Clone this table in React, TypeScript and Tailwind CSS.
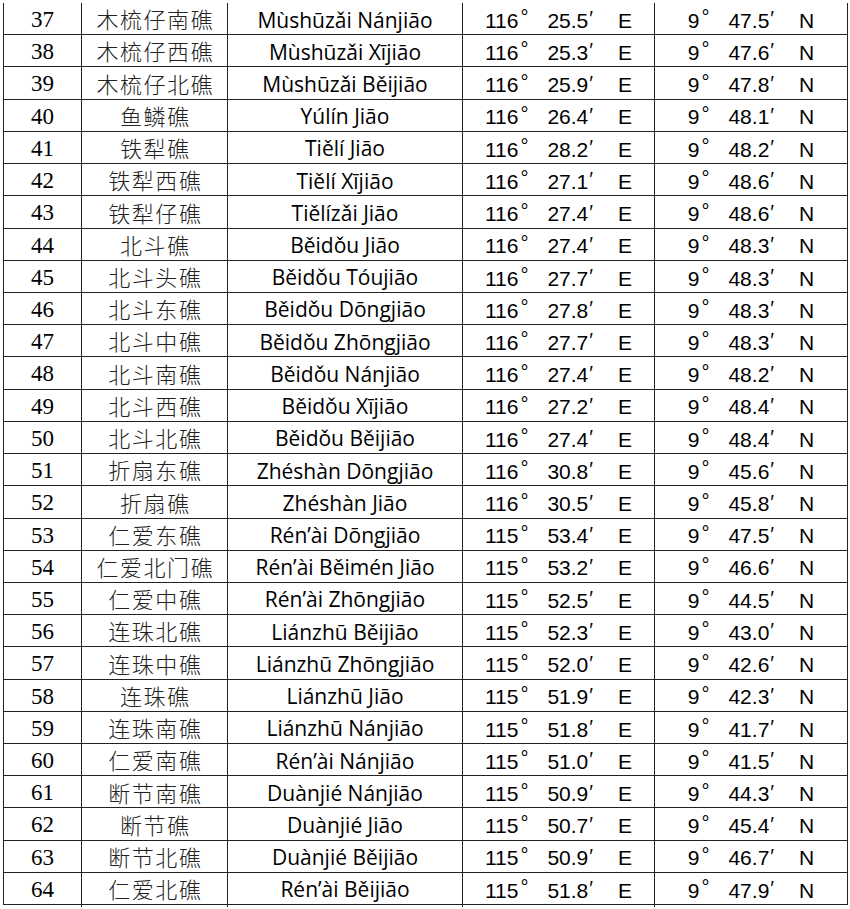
const rows: [number, string, string, string, string, string][] = [
  [37, '木梳仔南礁', 'Mùshūzǎi Nánjiāo', '116', '25.5', '47.5'],
  [38, '木梳仔西礁', 'Mùshūzǎi Xījiāo', '116', '25.3', '47.6'],
  [39, '木梳仔北礁', 'Mùshūzǎi Běijiāo', '116', '25.9', '47.8'],
  [40, '鱼鳞礁', 'Yúlín Jiāo', '116', '26.4', '48.1'],
  [41, '铁犁礁', 'Tiělí Jiāo', '116', '28.2', '48.2'],
  [42, '铁犁西礁', 'Tiělí Xījiāo', '116', '27.1', '48.6'],
  [43, '铁犁仔礁', 'Tiělízǎi Jiāo', '116', '27.4', '48.6'],
  [44, '北斗礁', 'Běidǒu Jiāo', '116', '27.4', '48.3'],
  [45, '北斗头礁', 'Běidǒu Tóujiāo', '116', '27.7', '48.3'],
  [46, '北斗东礁', 'Běidǒu Dōngjiāo', '116', '27.8', '48.3'],
  [47, '北斗中礁', 'Běidǒu Zhōngjiāo', '116', '27.7', '48.3'],
  [48, '北斗南礁', 'Běidǒu Nánjiāo', '116', '27.4', '48.2'],
  [49, '北斗西礁', 'Běidǒu Xījiāo', '116', '27.2', '48.4'],
  [50, '北斗北礁', 'Běidǒu Běijiāo', '116', '27.4', '48.4'],
  [51, '折扇东礁', 'Zhéshàn Dōngjiāo', '116', '30.8', '45.6'],
  [52, '折扇礁', 'Zhéshàn Jiāo', '116', '30.5', '45.8'],
  [53, '仁爱东礁', 'Rén’ài Dōngjiāo', '115', '53.4', '47.5'],
  [54, '仁爱北门礁', 'Rén’ài Běimén Jiāo', '115', '53.2', '46.6'],
  [55, '仁爱中礁', 'Rén’ài Zhōngjiāo', '115', '52.5', '44.5'],
  [56, '连珠北礁', 'Liánzhū Běijiāo', '115', '52.3', '43.0'],
  [57, '连珠中礁', 'Liánzhū Zhōngjiāo', '115', '52.0', '42.6'],
  [58, '连珠礁', 'Liánzhū Jiāo', '115', '51.9', '42.3'],
  [59, '连珠南礁', 'Liánzhū Nánjiāo', '115', '51.8', '41.7'],
  [60, '仁爱南礁', 'Rén’ài Nánjiāo', '115', '51.0', '41.5'],
  [61, '断节南礁', 'Duànjié Nánjiāo', '115', '50.9', '44.3'],
  [62, '断节礁', 'Duànjié Jiāo', '115', '50.7', '45.4'],
  [63, '断节北礁', 'Duànjié Běijiāo', '115', '50.9', '46.7'],
  [64, '仁爱北礁', 'Rén’ài Běijiāo', '115', '51.8', '47.9'],
];

function Coord({ deg, min, dir }: { deg: string; min: string; dir: string }) {
  return (
    <div className="flex items-center justify-center font-['Liberation_Sans',Arial,sans-serif] text-[21px] leading-none text-black">
      <span>{deg}</span>
      <span className="ml-[2px] -mt-[6px] text-[20px] font-light">°</span>
      <span className="ml-[19px]">{min}</span>
      <span className="ml-[1px] -mt-[4px] text-[20px] font-['DejaVu_Sans',sans-serif] font-light">′</span>
      <span className="ml-[25px]">{dir}</span>
    </div>
  );
}

export default function App() {
  return (
    <div className="w-[850px] h-[909px] bg-white pt-[3px] pl-[3px]">
      <div className="w-[845px] border-l border-r border-[#222]">
        {rows.map(([n, zh, py, lon, lonMin, latMin]) => (
          <div
            key={n}
            className="grid grid-cols-[78px_146px_235px_192px_192px] h-[32.22px] border-b border-[#222]"
          >
            <div className="flex items-center justify-center border-r border-[#222] font-['Liberation_Serif','Times_New_Roman',serif] text-[23px] text-black">
              {n}
            </div>
            <div className="flex items-center justify-center border-r border-[#222] font-['Noto_Sans_CJK_SC',sans-serif] font-light text-[22px] leading-none tracking-[1.5px] pl-[1.5px] pb-[4px] text-[#222]">
              {zh}
            </div>
            <div className="flex items-center justify-center border-r border-[#222] font-['Open_Sans',sans-serif] text-[21px] text-black">
              {py}
            </div>
            <div className="flex items-center justify-center border-r border-[#222]">
              <Coord deg={lon} min={lonMin} dir="E" />
            </div>
            <div className="flex items-center justify-center">
              <Coord deg="9" min={latMin} dir="N" />
            </div>
          </div>
        ))}
      </div>
    </div>
  );
}
